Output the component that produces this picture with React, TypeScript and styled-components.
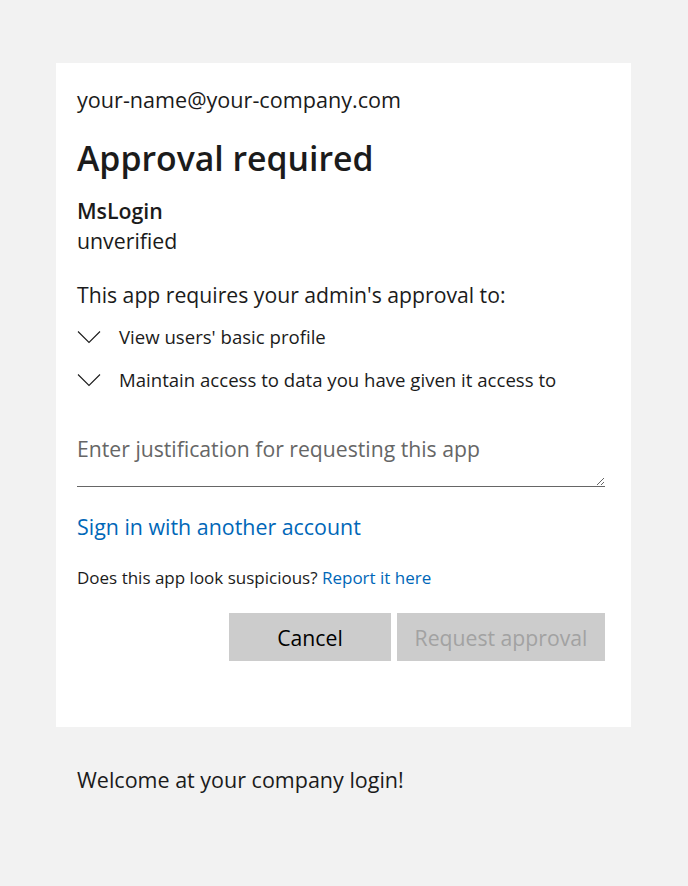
import styled, { createGlobalStyle } from 'styled-components'

const GlobalStyle = createGlobalStyle`
  html, body {
    margin: 0;
    padding: 0;
    background: #f2f2f2;
  }
  body {
    font-family: "Open Sans", "Noto Sans", sans-serif;
    color: #1b1b1b;
  }
  * { box-sizing: border-box; }
`

const Page = styled.div`
  width: 688px;
  min-height: 886px;
  padding: 63px 57px 0 56px;
`

const Card = styled.div`
  background: #fff;
  height: 664px;
  padding: 24px 26px 0 21px;
  display: flex;
  flex-direction: column;
`

const Email = styled.div`
  font-size: 21.6px;
  line-height: 26px;
`

const Title = styled.h1`
  margin: 23px 0 0;
  font-size: 33.8px;
  line-height: 44px;
  font-weight: 600;
`

const AppName = styled.div`
  margin-top: 16px;
  font-size: 21.3px;
  line-height: 30px;
  font-weight: 600;
`

const AppStatus = styled.div`
  font-size: 21.3px;
  line-height: 30px;
`

const Intro = styled.p`
  margin: 24px 0 0;
  font-size: 21.2px;
  line-height: 30px;
`

const PermList = styled.ul`
  list-style: none;
  margin: 14px 0 0;
  padding: 0;
  display: flex;
  flex-direction: column;
  gap: 17px;
`

const Perm = styled.li`
  display: flex;
  align-items: center;
  gap: 18px;
  font-size: 18.6px;
  line-height: 26px;
`

const Justification = styled.textarea`
  margin-top: 42px;
  width: 100%;
  height: 52px;
  border: none;
  border-bottom: 1px solid #666;
  outline: none;
  resize: vertical;
  padding: 0;
  font-family: inherit;
  font-size: 21.2px;
  line-height: 28px;
  color: #1b1b1b;
  &::placeholder { color: #666; }
`

const Link = styled.a`
  color: #0067b8;
  text-decoration: none;
  cursor: pointer;
`

const SignIn = styled(Link)`
  margin-top: 25px;
  font-size: 21.4px;
  line-height: 30px;
  align-self: flex-start;
`

const Suspicious = styled.div`
  margin-top: 25px;
  font-size: 17px;
  line-height: 22px;
`

const Buttons = styled.div`
  margin-top: 24px;
  display: flex;
  justify-content: flex-end;
  gap: 6px;
`

const Button = styled.button<{ $w: number }>`
  width: ${p => p.$w}px;
  height: 48px;
  border: none;
  background: #cccccc;
  font-family: inherit;
  font-size: 21.2px;
  color: #000;
  &:disabled { color: #a2a2a2; }
`

const Footer = styled.div`
  padding: 40px 21px;
  font-size: 21.5px;
  line-height: 26px;
`

const Chevron = () => (
  <svg width="24" height="14" viewBox="0 0 24 14" fill="none">
    <path d="M1 1.5 L12 12.5 L23 1.5" stroke="#1b1b1b" strokeWidth="1.1" />
  </svg>
)

export default function App() {
  return (
    <Page>
      <GlobalStyle />
      <Card>
        <Email>your-name@your-company.com</Email>
        <Title>Approval required</Title>
        <AppName>MsLogin</AppName>
        <AppStatus>unverified</AppStatus>
        <Intro>This app requires your admin's approval to:</Intro>
        <PermList>
          <Perm><Chevron />View users' basic profile</Perm>
          <Perm><Chevron />Maintain access to data you have given it access to</Perm>
        </PermList>
        <Justification placeholder="Enter justification for requesting this app" />
        <SignIn>Sign in with another account</SignIn>
        <Suspicious>Does this app look suspicious? <Link>Report it here</Link></Suspicious>
        <Buttons>
          <Button $w={162}>Cancel</Button>
          <Button $w={208} disabled>Request approval</Button>
        </Buttons>
      </Card>
      <Footer>Welcome at your company login!</Footer>
    </Page>
  )
}
